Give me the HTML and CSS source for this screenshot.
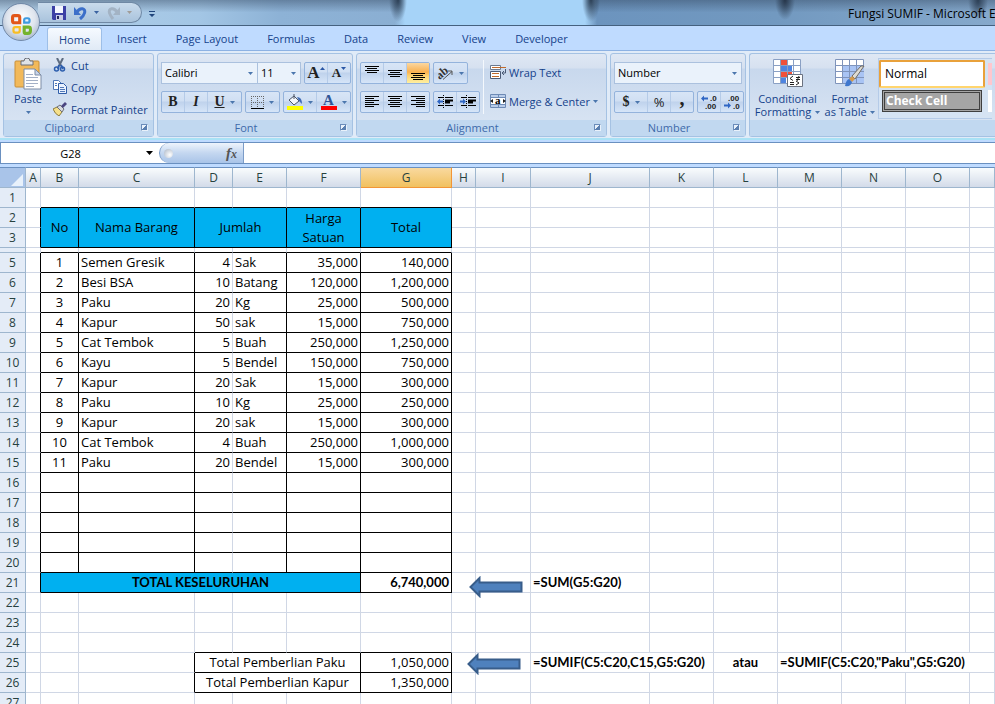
FILE: index.html
```
<!DOCTYPE html>
<html lang="id">
<head>
  <meta charset="UTF-8" />
  <meta name="viewport" content="width=device-width, initial-scale=1.0"/>
  <title>Fungsi SUMIF - Microsoft Excel</title>
  <link rel="stylesheet" href="styles.css">
</head>
<body>

  <!-- Title bar -->
  <header class="titlebar">
    <button class="office-button" aria-label="Office Button">
      <svg width="28" height="28" viewBox="0 0 28 28" fill="none" stroke-width="3">
        <path d="M12 12H6q-2 0-2-2V6q0-2 2-2h4q2 0 2 2z" stroke="#e2571a" stroke-width="3.500"/>
        <path d="M17 12V9q0-2 2-2h2q2 0 2 2v1q0 2-2 2z" stroke="#3f9be0" stroke-width="2.500"/>
        <path d="M12 17H7q-2 0-2 2v2q0 2 2 2h3q2 0 2-2z" stroke="#f8bd25" stroke-width="2.500"/>
        <path d="M17 17v5q0 2 2 2h2q3 0 3-3v-2q0-2-2-2z" stroke="#74b32c" stroke-width="3.500"/>
      </svg>
    </button>
    <div class="quick-access">
      <button aria-label="Save">
        <svg width="14" height="14"><path d="M0 0h14v14H1L0 13z" fill="#3b3fa5"/><path d="M3 0h8v7H3z" fill="#f4f6ff"/><path d="M4 9h7v5H4z" fill="#c9cde6"/><path d="M5 10h2v3H5z" fill="#23265f"/></svg>
      </button>
      <button aria-label="Undo">
        <svg width="14" height="14"><path d="M3 6C6 1 12 2 10.500 7 10 9 8.500 11 6 13" fill="none" stroke="#3c6fc9" stroke-width="3"/><path d="M0 1v8h7z" fill="#3c6fc9"/></svg>
        <svg class="caret" width="5" height="3"><path d="M0 0h5L2.500 3z" fill="#3a62a0"/></svg>
      </button>
      <button aria-label="Redo">
        <svg width="14" height="14"><path d="M10 6C7 1 1 2 2.500 7 3 9 4.500 11 6 13" fill="none" stroke="#a3b3c4" stroke-width="3"/><path d="M13 1v8H6z" fill="#a3b3c4"/></svg>
        <svg class="caret" width="5" height="3"><path d="M0 0h5L2.500 3z" fill="#a09c98"/></svg>
      </button>
    </div>
    <button class="customize" aria-label="Customize Quick Access Toolbar">
      <svg width="6" height="6"><path d="M0 0h6v1H0zM0 3h6L3 6z" fill="#20457c"/></svg>
    </button>
    <h1 class="window-title">Fungsi SUMIF - Microsoft Excel</h1>
  </header>

  <nav class="tabs">
    <button class="active">Home</button>
    <button>Insert</button>
    <button>Page Layout</button>
    <button>Formulas</button>
    <button>Data</button>
    <button>Review</button>
    <button>View</button>
    <button>Developer</button>
  </nav>

  <!-- Ribbon -->
  <div class="ribbon">
    <section class="group clipboard">
      <div class="tools">
        <button class="big paste">
          <svg width="28" height="32" viewBox="0 0 28 32">
            <rect x="1" y="3" width="24" height="26" rx="1" fill="#f2b95a" stroke="#c98f38"/>
            <path d="M7 3h3q0-3 3-3t3 3h3v4H7z" fill="#dfe3e8" stroke="#6b6f78"/>
            <path d="M10 11h11l6 6v14H10z" fill="#fff" stroke="#7d8ca5"/>
            <path d="M21 11v6h6z" fill="#c9d6ea" stroke="#7d8ca5"/>
            <path d="M12 16.500h7M12 19.500h12M12 22.500h12M12 25.500h12M12 28.500h8" stroke="#a3b0c6"/>
          </svg>
          <span>Paste</span>
          <svg class="caret" width="5" height="3"><path d="M0 0h5L2.500 3z" fill="#4b76ad"/></svg>
        </button>
        <div class="stack">
          <button class="flat">
            <svg width="14" height="14"><path d="M4 0l4 8M10 0L6 8" stroke="#5d6c80" stroke-width="2"/><path d="M6 7l-1 4M8 7l2 4" stroke="#2e5fae" stroke-width="2"/><circle cx="3.500" cy="11" r="2" fill="none" stroke="#2e5fae" stroke-width="1.500"/><circle cx="9.500" cy="11" r="2" fill="none" stroke="#2e5fae" stroke-width="1.500"/></svg>
            Cut
          </button>
          <button class="flat">
            <svg width="14" height="14"><path d="M.5.5h5l3 3v6h-8z" fill="#fff" stroke="#5078b8"/><path d="M5.500 3.500h5l3 3v7h-8z" fill="#eaf2ff" stroke="#2f5da8"/><path d="M2 3.500h2M2 5.500h2M7 7.500h4M7 9.500h5M7 11.500h5" stroke="#5078b8"/></svg>
            Copy
          </button>
          <button class="flat">
            <svg width="14" height="14"><path d="M0 7l4-2 5 5-3 4q-4-2-6-7z" fill="#f6e08a" stroke="#8b7a3c"/><path d="M4 5l3-2 4 4-2 3z" fill="#d5d8dd" stroke="#6e7077"/><path d="M8 4l4-4 2 2-4 4z" fill="#4a4580"/></svg>
            Format Painter
          </button>
        </div>
      </div>
      <footer>Clipboard <button class="launcher" aria-label="Clipboard options"></button></footer>
    </section>

    <section class="group font">
      <div class="tools rows">
        <div class="row">
          <div class="joined">
            <select class="face" aria-label="Font"><option>Calibri</option></select>
            <select class="size" aria-label="Font Size"><option>11</option></select>
          </div>
          <div class="btns">
            <button class="serif grow" aria-label="Grow Font">A<svg width="5" height="3"><path d="M0 3h5L2.500 0z" fill="#2b57a5"/></svg></button>
            <button class="serif shrink" aria-label="Shrink Font">A<svg width="5" height="3"><path d="M0 0h5L2.500 3z" fill="#2b57a5"/></svg></button>
          </div>
        </div>
        <div class="row">
          <div class="btns">
            <button class="serif">B</button>
            <button class="serif italic">I</button>
            <button class="serif wide"><u>U</u><svg class="caret" width="5" height="3"><path d="M0 0h5L2.500 3z" fill="#4b76ad"/></svg></button>
          </div>
          <div class="btns">
            <button class="wide" aria-label="Borders">
              <svg width="13" height="13"><path d="M0 .5h13M0 6.500h13M.5 0v12M6.500 0v12M12.500 0v12" stroke="#666" stroke-dasharray="1 1"/><path d="M0 12.500h13" stroke="#000"/></svg>
              <svg class="caret" width="5" height="3"><path d="M0 0h5L2.500 3z" fill="#4b76ad"/></svg>
            </button>
          </div>
          <div class="btns">
            <button class="wide" aria-label="Fill Color">
              <svg width="16" height="16"><path d="M2 6l5-4 5 5-5 4z" fill="#f4f7fb" stroke="#4c5668"/><path d="M7 0v5" stroke="#4c5668"/><path d="M10 3q5 0 5 7l-3-3z" fill="#3f6bb5"/><path d="M0 12h16v4H0z" fill="#ff0"/></svg>
              <svg class="caret" width="5" height="3"><path d="M0 0h5L2.500 3z" fill="#4b76ad"/></svg>
            </button>
            <button class="wide font-color" aria-label="Font Color">
              <span class="serif">A</span>
              <svg class="caret" width="5" height="3"><path d="M0 0h5L2.500 3z" fill="#4b76ad"/></svg>
            </button>
          </div>
        </div>
      </div>
      <footer>Font <button class="launcher" aria-label="Font options"></button></footer>
    </section>

    <section class="group alignment">
      <div class="tools">
        <div class="rows">
          <div class="row">
            <div class="btns">
              <button aria-label="Top Align"><svg width="14" height="14"><path d="M0 .5h14M2 2.500h10M0 4.500h14M2 6.500h10" stroke="#000"/></svg></button>
              <button aria-label="Middle Align"><svg width="14" height="14"><path d="M0 4.500h14M2 6.500h10M0 8.500h14M2 10.500h10" stroke="#000"/></svg></button>
              <button class="on" aria-label="Bottom Align"><svg width="14" height="14"><path d="M0 7.500h14M2 9.500h10M0 11.500h14M2 13.500h10" stroke="#000"/></svg></button>
            </div>
            <div class="btns">
              <button class="orient" aria-label="Orientation">
                <svg width="16" height="14"><g transform="rotate(-40 7 8)"><text x="-1" y="9" font-size="12" font-weight="bold" fill="#333">ab</text></g><path d="M5 13.500l9-8M10 5h4v4" fill="none" stroke="#555"/></svg>
                <svg class="caret" width="5" height="3"><path d="M0 0h5L2.500 3z" fill="#4b76ad"/></svg>
              </button>
            </div>
          </div>
          <div class="row">
            <div class="btns">
              <button aria-label="Align Left"><svg width="14" height="12"><path d="M0 .5h14M0 2.500h9M0 4.500h14M0 6.500h9M0 8.500h14M0 10.500h9" stroke="#000"/></svg></button>
              <button aria-label="Center"><svg width="14" height="12"><path d="M0 .5h14M2 2.500h10M0 4.500h14M2 6.500h10M0 8.500h14M2 10.500h10" stroke="#000"/></svg></button>
              <button aria-label="Align Right"><svg width="14" height="12"><path d="M0 .5h14M5 2.500h9M0 4.500h14M5 6.500h9M0 8.500h14M5 10.500h9" stroke="#000"/></svg></button>
            </div>
            <div class="btns">
              <button aria-label="Decrease Indent"><svg width="16" height="14"><path d="M1 2.500h5M8 2.500h8M8 10.500h8M1 10.500h5" stroke="#000"/><path d="M8 5.500h8M8 7.500h5" stroke="#000" stroke-width="2"/><path d="M6.500 0v14" stroke="#000" stroke-dasharray="1 1"/><path d="M0 6.500l3-3v2h3v2H3v2z" fill="#2f66c4"/></svg></button>
              <button aria-label="Increase Indent"><svg width="16" height="14"><path d="M1 2.500h5M8 2.500h8M8 10.500h8M1 10.500h5" stroke="#000"/><path d="M8 5.500h8M8 7.500h5" stroke="#000" stroke-width="2"/><path d="M6.500 0v14" stroke="#000" stroke-dasharray="1 1"/><path d="M6 6.500l-3-3v2H0v2h3v2z" fill="#2f66c4"/></svg></button>
            </div>
          </div>
        </div>
        <div class="rows divided">
          <button class="flat">
            <svg width="16" height="16"><path d="M.5 1.500h10v4H.5z" fill="#fff" stroke="#6b7a90"/><path d="M.5 7.500h10v7H.5z" fill="#fff" stroke="#4a5a75"/><path d="M2 3.500h14M2 9.500h7M2 12.500h7" stroke="#c06a2c"/><path d="M15.500 5v4M15.500 9h-3M14 7l-2 2 2 2" fill="none" stroke="#4a5a75"/></svg>
            Wrap Text
          </button>
          <button class="flat">
            <svg width="16" height="16"><path d="M.5 1.500h15v13H.5z" fill="#fff" stroke="#6d8ab5"/><path d="M1 2h14v2H1zM1 12h14v2H1z" fill="#b9cdea"/><path d="M8.500 1v3M8.500 12v3M0 4.500h16M0 11.500h16" stroke="#6d8ab5"/><path d="M0 8l3-2v4zM16 8l-3-2v4z" fill="#222"/><text x="5" y="11" font-size="11" font-weight="bold">a</text></svg>
            Merge &amp; Center
            <svg class="caret" width="5" height="3"><path d="M0 0h5L2.500 3z" fill="#4b76ad"/></svg>
          </button>
        </div>
      </div>
      <footer>Alignment <button class="launcher" aria-label="Alignment options"></button></footer>
    </section>

    <section class="group number">
      <div class="tools rows">
        <select class="format" aria-label="Number Format"><option>Number</option></select>
        <div class="row">
          <div class="btns">
            <button class="wide"><span class="serif">$</span><svg class="caret" width="5" height="3"><path d="M0 0h5L2.500 3z" fill="#4b76ad"/></svg></button>
            <button class="percent">%</button>
            <button class="serif comma">,</button>
          </div>
          <div class="btns">
            <button class="decimals" aria-label="Increase Decimal"><svg width="17" height="16"><path d="M0 4.500l3-3v2h4v2H3v2z" fill="#2f66c4"/><text x="9" y="7">.0</text><text x="4" y="15">.00</text></svg></button>
            <button class="decimals" aria-label="Decrease Decimal"><svg width="17" height="16"><path d="M7 11.500l-3-3v2H0v2h4v2z" fill="#2f66c4"/><text x="4" y="7">.00</text><text x="9" y="15">.0</text></svg></button>
          </div>
        </div>
      </div>
      <footer>Number <button class="launcher" aria-label="Number options"></button></footer>
    </section>

    <section class="group styles">
      <div class="tools">
        <button class="big conditional">
          <svg width="30" height="29">
            <path d="M.5.500h27v24H.5z" fill="#fff" stroke="#8aa0c4"/>
            <path d="M7 1h7v6H7zM7 13h12v6H7z" fill="#f0503a"/>
            <path d="M7 7h12v6H7zM7 19h6v5H7z" fill="#4e84e0"/>
            <path d="M0 6.500h28M0 12.500h28M0 18.500h28M7.500 0v25M14.500 0v25M20.500 0v25" stroke="#8aa0c4"/>
            <path d="M14.500 15.500h15v12h-15z" fill="#fff" stroke="#6b7280"/>
            <path d="M20 17l-3 2.500 3 2M17 23.500h4M17 25.500h4M23 18.500h4M23 20.500h4M26 17l-2 5M23 22l3 2-3 2" fill="none" stroke="#222"/>
          </svg>
          <span>Conditional</span>
          <span>Formatting <svg class="caret" width="5" height="3"><path d="M0 0h5L2.500 3z" fill="#4b76ad"/></svg></span>
        </button>
        <button class="big as-table">
          <svg width="30" height="29">
            <path d="M.5.500h28v24H.5z" fill="#fff" stroke="#7f94bb"/>
            <path d="M7 6h22v18H7z" fill="#a9c4f4"/>
            <path d="M0 6.500h29M0 12.500h29M0 18.500h29M7.500 0v25M14.500 0v25M21.500 0v25" stroke="#7f94bb"/>
            <path d="M29 7l-9 13-3-3 9-10z" fill="#dedbd3" stroke="#6f6b65"/>
            <path d="M20 20l-3-3-3 3 3 3z" fill="#d39a4e"/>
            <path d="M17 23l-3-3q-3 1-4 7 6 1 7-4z" fill="#3f77cd"/>
          </svg>
          <span>Format</span>
          <span>as Table <svg class="caret" width="5" height="3"><path d="M0 0h5L2.500 3z" fill="#4b76ad"/></svg></span>
        </button>
        <div class="gallery">
          <button class="style-normal">Normal</button>
          <button class="style-bad">Bad</button>
          <button class="style-check">Check Cell</button>
          <button class="style-link">Linked</button>
        </div>
      </div>
      <footer></footer>
    </section>
  </div>

  <!-- Formula bar -->
  <div class="formula-bar">
    <div class="name-box">
      <input type="text" value="G28" aria-label="Name Box">
      <svg width="7" height="4"><path d="M0 0h7L3.500 4z" fill="#000"/></svg>
    </div>
    <div class="fx">
      <span class="knob"></span>
      <button aria-label="Insert Function"><i>f</i><small>x</small></button>
    </div>
    <input class="formula" type="text" aria-label="Formula">
  </div>

  <!-- Worksheet -->
  <main class="sheet">
    <table>
      <colgroup>
        <col class="w-head"><col class="w-a"><col class="w-b"><col class="w-c"><col class="w-d"><col class="w-e">
        <col class="w-f"><col class="w-g"><col class="w-h"><col class="w-i"><col class="w-j">
        <col class="w-k"><col class="w-k"><col class="w-k"><col class="w-k"><col class="w-k"><col>
      </colgroup>
      <thead>
        <tr>
          <th class="corner"><svg width="12" height="12"><path d="M12 0v12H0z" fill="#e8f1fb"/></svg></th>
          <th>A</th><th>B</th><th>C</th><th>D</th><th>E</th><th>F</th><th class="selected">G</th><th>H</th>
          <th>I</th><th>J</th><th>K</th><th>L</th><th>M</th><th>N</th><th>O</th><th></th>
        </tr>
      </thead>
      <tbody id="rows"></tbody>
    </table>
    <svg class="arrow arrow-total" width="54" height="22"><path d="M1.500 11L10.500 2v4.500h42v9h-42V20z" fill="#4f81bd" stroke="#385d8a" stroke-width="2"/></svg>
    <svg class="arrow arrow-sumif" width="54" height="22"><path d="M1.500 11L10.500 2v4.500h42v9h-42V20z" fill="#4f81bd" stroke="#385d8a" stroke-width="2"/></svg>
  </main>

  <script src="script.js"></script>
</body>
</html>
```
FILE: styles.css
```
* {
  box-sizing: border-box;
}
body {
  margin: 0;
  height: 100vh;
  overflow: hidden;
  display: flex;
  flex-direction: column;
  background: #bfdbff;
  font-family: "Open Sans", "Noto Sans", sans-serif;
  font-size: 11px;
  color: #15428b;
}
button, input, select {
  font: inherit;
  color: inherit;
  margin: 0;
  padding: 0;
  border: none;
  background: none;
  border-radius: 0;
}
button {
  white-space: nowrap;
}
svg {
  flex: none;
}

/* title bar */
.titlebar {
  position: relative;
  display: flex;
  align-items: center;
  height: 26px;
  flex: none;
  padding-left: 38px;
  border-bottom: 1px solid #45617f;
  background:
    radial-gradient(ellipse 9px 22px at 398px 0, #2c3f55, transparent),
    radial-gradient(ellipse 9px 22px at 591px 0, #2c3f55, transparent),
    radial-gradient(ellipse 10px 20px at 785px 0, #26364a, transparent),
    radial-gradient(ellipse 10px 20px at 978px 0, #2c3f55, transparent),
    linear-gradient(90deg, transparent 395px, #a6d3f8 405px, #a6d3f8 585px, transparent 597px),
    linear-gradient(rgba(50, 70, 95, 0.45), transparent 50%),
    linear-gradient(90deg, #b4d0e8, #a3c6e5 20%, #8db2d6 28%, #8aaed2 42%, #6c94be 60%, #7299c0 78%, #86a9cc);
}
.office-button {
  position: absolute;
  left: 2px;
  top: 3px;
  z-index: 2;
  width: 38px;
  height: 38px;
  padding: 5px 5px 0 6px;
  border: 1px solid #7289a8;
  border-radius: 50%;
  background: radial-gradient(circle at 50% 40%, #fff, #dfe5ee 50%, #b3c0d3 75%, #f2f6fb);
}
.office-button svg {
  display: block;
  width: 25px;
  height: 25px;
}
.quick-access {
  display: flex;
  align-items: center;
  gap: 8px;
  width: 104px;
  height: 21px;
  padding-left: 14px;
  border: 1px solid #6f88a4;
  border-left: none;
  border-radius: 0 11px 11px 0;
  background: linear-gradient(#c9dbec, #a9c3dc);
}
.quick-access button {
  display: flex;
  align-items: center;
  gap: 6px;
}
.customize {
  margin-left: 7px;
}
.window-title {
  margin: 0 0 0 auto;
  width: 147px;
  padding-top: 2px;
  overflow: hidden;
  white-space: nowrap;
  font-size: 12px;
  font-weight: normal;
  color: #000;
}

/* ribbon tabs */
.tabs {
  display: flex;
  height: 24px;
  flex: none;
  padding: 1px 0 0 47px;
}
.tabs button {
  padding: 0 14px 0 15px;
}
.tabs .active {
  padding: 0 11px;
  border: 1px solid #9dbfe8;
  border-bottom: none;
  border-radius: 3px 3px 0 0;
  background: linear-gradient(#f6faff, #e0eaf6);
}

/* ribbon */
.ribbon {
  display: flex;
  gap: 3px;
  height: 90px;
  flex: none;
  padding: 2px 0 1px 3px;
  border-top: 1px solid #8db2e3;
  border-bottom: 2px solid #a9e2f5;
  background: #e0ebf8;
}
.group {
  display: flex;
  flex-direction: column;
  flex: none;
  border: 1px solid #a5c2e3;
  border-radius: 3px;
  background: linear-gradient(#dfe8f4, #d6e1f0 14px, #c8d8ed 15px, #dbe6f4);
}
.clipboard {
  width: 151px;
}
.font {
  width: 196px;
}
.alignment {
  width: 251px;
}
.number {
  width: 136px;
}
.styles {
  flex: 1;
  min-width: 0;
  border-right: none;
  border-radius: 3px 0 0 3px;
}
.group footer {
  position: relative;
  height: 16px;
  padding-right: 18px;
  line-height: 16px;
  text-align: center;
  color: #3e6aaa;
  background: #c1d8f0;
}
.launcher {
  position: absolute;
  right: 5px;
  top: 4px;
  width: 7px;
  height: 7px;
  border: 1px solid #6a8cba;
  border-right-color: #e8f1fb;
  border-bottom-color: #e8f1fb;
  background: linear-gradient(135deg, #e8f1fb 40%, #5a7fb0 41%);
}
.tools {
  display: flex;
  flex: 1;
  min-height: 0;
  padding: 0 3px;
}
.rows {
  display: flex;
  flex-direction: column;
  gap: 7px;
  padding-top: 8px;
}
.row {
  display: flex;
  gap: 3px;
}
.big {
  display: flex;
  flex-direction: column;
  align-items: center;
  padding-top: 4px;
  line-height: 13px;
}
.big .caret {
  margin: 0 0 2px 1px;
}
.styles .big {
  padding-top: 5px;
}
.styles .big > svg {
  margin-bottom: 4px;
}
.paste {
  width: 42px;
}
.paste span {
  margin-bottom: 4px;
  line-height: 17px;
}
.stack {
  display: flex;
  flex-direction: column;
  padding-left: 4px;
}
.flat {
  display: flex;
  align-items: center;
  gap: 4px;
  height: 22px;
}
.btns {
  display: flex;
  height: 22px;
  border: 1px solid #94b3dc;
  border-radius: 2px;
  background: linear-gradient(#d8e5f6, #d0dff3 45%, #bfd2ec 50%, #d6e5f8);
}
.btns button {
  display: flex;
  align-items: center;
  justify-content: center;
  gap: 5px;
  width: 23px;
  border-right: 1px solid #b5cbe8;
}
.btns button:last-child {
  width: 22px;
  border-right: none;
}
.btns button.wide,
.btns button.orient {
  width: 33px;
}
.btns .on {
  background: linear-gradient(#fbd7a0, #f9b04f 45%, #fccd6b 60%, #fff0a0);
}
.serif {
  font-family: "Liberation Serif", serif;
  font-size: 14px;
  font-weight: bold;
  color: #222;
}
.italic {
  font-style: italic;
}
.grow {
  font-size: 17px;
}
.btns .grow,
.btns .shrink {
  gap: 0;
}
.btns .shrink {
  font-size: 13px;
}
.grow svg,
.shrink svg {
  margin-bottom: 10px;
}
.font-color .serif {
  width: 16px;
  height: 16px;
  border-bottom: 4px solid #f00;
  line-height: 12px;
  font-size: 15px;
  color: #2f5597;
}
.orient svg,
.flat svg {
  font-family: "Liberation Serif", serif;
}
.percent {
  font-size: 13px;
  color: #222;
}
.btns .comma {
  font-size: 20px;
  line-height: 10px;
  padding-bottom: 8px;
}
.decimals svg {
  font-family: "Liberation Sans", sans-serif;
  font-size: 8px;
  font-weight: bold;
  fill: #222;
}
select {
  appearance: none;
  height: 22px;
  padding: 0 0 1px 3px;
  border: 1px solid #abc1de;
  color: #000;
  background: #eaf2fb url("data:image/svg+xml,%3Csvg xmlns='http://www.w3.org/2000/svg' width='5' height='3'%3E%3Cpath d='M0 0h5L2.500 3z' fill='%234b76ad'/%3E%3C/svg%3E") no-repeat right 4px center;
}
.joined {
  display: flex;
}
.face {
  width: 97px;
}
.size {
  width: 43px;
  border-left: none;
}
.format {
  width: 128px;
}
.divided {
  margin: 6px 0 6px 3px;
  padding: 1px 0 0 6px;
  border-left: 1px solid #f4f8fd;
}
.divided .flat {
  gap: 3px;
}
.conditional {
  width: 69px;
}
.as-table {
  width: 56px;
}
.gallery {
  display: grid;
  grid-template-columns: 106px 1fr;
  grid-template-rows: 28px 22px;
  gap: 2px 3px;
  flex: 1;
  min-width: 0;
  height: 61px;
  margin-top: 4px;
  padding-top: 1px;
  border: 1px solid #b5cbe8;
  border-right: none;
  overflow: hidden;
  background: #d5e3f3;
  font-size: 12px;
}
.gallery button {
  padding-left: 4px;
  text-align: left;
  overflow: hidden;
  color: #000;
  background: #fff;
}
.gallery .style-normal {
  padding-bottom: 2px;
  border: 2px solid #e9a13b;
  border-bottom-color: #ffd56e;
  border-radius: 2px;
}
.gallery .style-bad {
  margin: 3px 0;
  color: #9c0006;
  background: #ffc7ce;
}
.gallery .style-check {
  margin: 0 3px;
  padding-left: 1px;
  border: 3px double #3f3f3f;
  font-weight: bold;
  line-height: 12px;
  color: #fff;
  background: #a5a5a5;
}
.gallery .style-link {
  font-style: italic;
  color: #7f7f7f;
}

/* formula bar */
.formula-bar {
  display: flex;
  height: 22px;
  flex: none;
  margin: 2px 0 3px;
  border: 1px solid #6a90c0;
  border-right: none;
  background: #fff;
  color: #000;
}
.name-box {
  display: flex;
  align-items: center;
  width: 158px;
}
.name-box input {
  width: 145px;
  padding-right: 6px;
  text-align: center;
}
.fx {
  display: flex;
  align-items: center;
  justify-content: space-between;
  width: 85px;
  padding: 0 6px 0 4px;
  border: 1px solid #7b9cc8;
  border-width: 0 1px;
  border-radius: 10px 0 0 10px;
  background: linear-gradient(#eef4fc, #c4d7f0 50%, #a9c4e8);
}
.knob {
  width: 9px;
  height: 9px;
  border-radius: 50%;
  background: radial-gradient(circle at 65% 65%, #fff, #a9b4c4);
}
.fx button {
  font: italic bold 15px/18px "Liberation Serif", serif;
  color: #555;
}
.fx small {
  font-size: 12px;
}
.formula {
  flex: 1;
  min-width: 0;
}

/* worksheet */
.sheet {
  position: relative;
  flex: 1;
  min-height: 0;
  overflow: hidden;
  background: #fff;
}
table {
  width: 100%;
  table-layout: fixed;
  border-collapse: separate;
  border-spacing: 0;
}
.w-head { width: 26px; }
.w-a { width: 15px; }
.w-b { width: 38px; }
.w-c { width: 116px; }
.w-d { width: 38px; }
.w-e { width: 54px; }
.w-f { width: 74px; }
.w-g { width: 91px; }
.w-h { width: 24px; }
.w-i { width: 55px; }
.w-j { width: 119px; }
.w-k { width: 64px; }
th {
  height: 20px;
  padding: 1px 0 0;
  font-size: 12px;
  font-weight: normal;
  line-height: 18px;
  color: #27413e;
  border-right: 1px solid #9eb6ce;
  border-bottom: 1px solid #9eb6ce;
  background: #e4ecf7;
}
thead th {
  height: 21px;
  padding-top: 1px;
  border-top: 1px solid #6a90c0;
  background: linear-gradient(#f9fcfd, #d3dbe9);
}
thead .corner {
  padding: 4px 2px 0 0;
  line-height: 0;
  text-align: right;
  background: #a9c4e9;
}
thead .selected {
  border-right-color: #f29536;
  border-bottom-color: #f29536;
  background: linear-gradient(#f9d99f, #f1c15f);
}
td {
  height: 20px;
  padding: 0 2px;
  font-size: 13px;
  line-height: 19px;
  white-space: nowrap;
  color: #000;
  border-right: 1px solid #d0d7e5;
  border-bottom: 1px solid #d0d7e5;
}
.thin th,
.thin td {
  height: 5px;
  padding: 0;
  line-height: 0;
}
.line-right {
  border-right-color: #000;
}
.line-bottom {
  border-bottom-color: #000;
}
.head {
  white-space: normal;
  background: #00b0f0;
}
.center {
  text-align: center;
}
.right {
  text-align: right;
}
.bold {
  font-family: Lato, "Open Sans", sans-serif;
  font-weight: bold;
}
.fill {
  background: #00b0f0;
}
.arrow {
  position: absolute;
}
.arrow-total {
  left: 469px;
  top: 409px;
}
.arrow-sumif {
  left: 467px;
  top: 486px;
}
```
FILE: script.js
```
const columns = "ABCDEFGHIJKLMNOP".split("");
const box = "line-right line-bottom";

const items = [
  [1, "Semen Gresik", 4, "Sak", "35,000", "140,000"],
  [2, "Besi BSA", 10, "Batang", "120,000", "1,200,000"],
  [3, "Paku", 20, "Kg", "25,000", "500,000"],
  [4, "Kapur", 50, "sak", "15,000", "750,000"],
  [5, "Cat Tembok", 5, "Buah", "250,000", "1,250,000"],
  [6, "Kayu", 5, "Bendel", "150,000", "750,000"],
  [7, "Kapur", 20, "Sak", "15,000", "300,000"],
  [8, "Paku", 10, "Kg", "25,000", "250,000"],
  [9, "Kapur", 20, "sak", "15,000", "300,000"],
  [10, "Cat Tembok", 4, "Buah", "250,000", "1,000,000"],
  [11, "Paku", 20, "Bendel", "15,000", "300,000"]
];

const cells = {};
const covered = new Set();

function put(ref, text, cls, colspan = 1, rowspan = 1) {
  cells[ref] = { text, cls, colspan, rowspan };
  const col = columns.indexOf(ref[0]);
  const row = Number(ref.slice(1));
  for (let r = row; r < row + rowspan; r++) {
    for (let c = col; c < col + colspan; c++) {
      if (r !== row || c !== col) covered.add(columns[c] + r);
    }
  }
}

// Table heading, rows 2 and 3
["B1", "C1", "D1", "E1", "F1", "G1"].forEach(ref => put(ref, "", "line-bottom"));
["A2", "A3"].forEach(ref => put(ref, "", "line-right"));
put("B2", "No", "head center " + box, 1, 2);
put("C2", "Nama Barang", "head center " + box, 1, 2);
put("D2", "Jumlah", "head center " + box, 2, 2);
put("F2", "Harga Satuan", "head center " + box, 1, 2);
put("G2", "Total", "head center " + box, 1, 2);
["B4", "C4", "D4", "E4", "F4", "G4"].forEach(ref => put(ref, "", "line-bottom"));

// Items, rows 5 to 20
for (let row = 5; row <= 20; row++) {
  const item = items[row - 5] || ["", "", "", "", "", ""];
  put("A" + row, "", "line-right");
  put("B" + row, item[0], "center " + box);
  put("C" + row, item[1], box);
  put("D" + row, item[2], "right line-bottom");
  put("E" + row, item[3], box);
  put("F" + row, item[4], "right " + box);
  put("G" + row, item[5], "right " + box);
}

// Totals
put("A21", "", "line-right");
put("B21", "TOTAL KESELURUHAN", "fill center bold " + box, 5);
put("G21", "6,740,000", "right bold " + box);
put("J21", "=SUM(G5:G20)", "bold");

["D24", "E24", "F24", "G24"].forEach(ref => put(ref, "", "line-bottom"));
["C25", "C26"].forEach(ref => put(ref, "", "line-right"));
put("D25", "Total Pemberlian Paku", "center " + box, 3);
put("G25", "1,050,000", "right " + box);
put("D26", "Total Pemberlian Kapur", "center " + box, 3);
put("G26", "1,350,000", "right " + box);
put("J25", "=SUMIF(C5:C20,C15,G5:G20)", "bold", 2);
put("L25", "atau", "center bold");
put("M25", '=SUMIF(C5:C20,"Paku",G5:G20)', "bold", 4);

const tbody = document.getElementById("rows");
for (let row = 1; row <= 27; row++) {
  const tr = document.createElement("tr");
  const th = document.createElement("th");
  // row 4 is squeezed to a thin strip
  if (row === 4) tr.className = "thin";
  else th.textContent = row;
  tr.appendChild(th);

  columns.forEach(col => {
    const ref = col + row;
    if (covered.has(ref)) return;
    const td = document.createElement("td");
    const cell = cells[ref];
    if (cell) {
      td.textContent = cell.text;
      td.className = cell.cls;
      td.colSpan = cell.colspan;
      td.rowSpan = cell.rowspan;
    }
    tr.appendChild(td);
  });
  tbody.appendChild(tr);
}
```
